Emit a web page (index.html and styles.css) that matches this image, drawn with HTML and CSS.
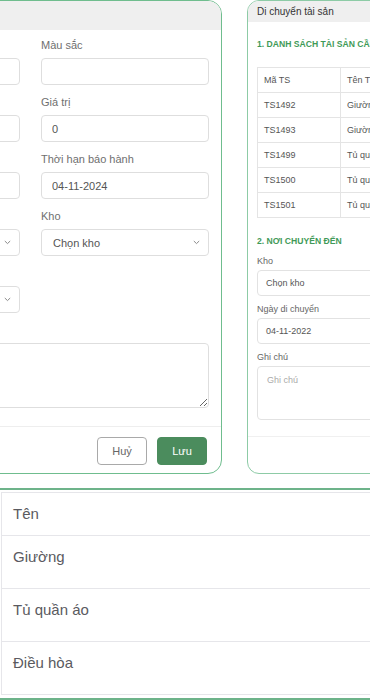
FILE: index.html
```html
<!DOCTYPE html>
<html>
<head>
    <title>Quản lý tài sản</title>
    <link rel="stylesheet" href="styles.css">
</head>
<body>
    <div class="top-row">
        <!-- Sửa tài sản -->
        <div class="card card-edit">
            <div class="card-head"></div>
            <div class="card-body">
                <div class="form-grid">
                    <div class="field">
                        <label></label>
                        <input class="input" type="text">
                    </div>
                    <div class="field">
                        <label>Màu sắc</label>
                        <input class="input" type="text">
                    </div>
                    <div class="field">
                        <label></label>
                        <input class="input" type="text">
                    </div>
                    <div class="field">
                        <label>Giá trị</label>
                        <input class="input" type="text" value="0">
                    </div>
                    <div class="field">
                        <label></label>
                        <input class="input" type="text">
                    </div>
                    <div class="field">
                        <label>Thời hạn báo hành</label>
                        <input class="input" type="text" value="04-11-2024">
                    </div>
                    <div class="field">
                        <label></label>
                        <div class="select"><span></span><svg width="7" height="5" viewBox="0 0 7 5"><path d="M0.8 1l2.7 2.6L6.2 1" fill="none" stroke="#8a8a8a" stroke-width="1"/></svg></div>
                    </div>
                    <div class="field">
                        <label>Kho</label>
                        <div class="select"><span>Chọn kho</span><svg width="7" height="5" viewBox="0 0 7 5"><path d="M0.8 1l2.7 2.6L6.2 1" fill="none" stroke="#8a8a8a" stroke-width="1"/></svg></div>
                    </div>
                    <div class="field">
                        <label></label>
                        <div class="select"><span></span><svg width="7" height="5" viewBox="0 0 7 5"><path d="M0.8 1l2.7 2.6L6.2 1" fill="none" stroke="#8a8a8a" stroke-width="1"/></svg></div>
                    </div>
                    <div class="field"></div>
                </div>
                <div class="field">
                    <label></label>
                    <textarea class="textarea"></textarea>
                </div>
            </div>
            <div class="card-foot">
                <button class="btn btn-outline">Huỷ</button>
                <button class="btn btn-green">Lưu</button>
            </div>
        </div>

        <!-- Di chuyển tài sản -->
        <div class="card card-move">
            <div class="move-head">Di chuyển tài sản</div>
            <div class="move-body">
                <div class="section-title">1. Danh sách tài sản cần di chuyển</div>
                <table class="move-table">
                    <tr><th>Mã TS</th><th>Tên TS</th></tr>
                    <tr><td>TS1492</td><td>Giường</td></tr>
                    <tr><td>TS1493</td><td>Giường</td></tr>
                    <tr><td>TS1499</td><td>Tủ quần áo</td></tr>
                    <tr><td>TS1500</td><td>Tủ quần áo</td></tr>
                    <tr><td>TS1501</td><td>Tủ quần áo</td></tr>
                </table>
                <div class="section-title second">2. Nơi chuyển đến</div>
                <div class="m-field">
                    <label>Kho</label>
                    <div class="m-input">Chọn kho</div>
                </div>
                <div class="m-field">
                    <label>Ngày di chuyển</label>
                    <div class="m-input">04-11-2022</div>
                </div>
                <div class="m-field">
                    <label>Ghi chú</label>
                    <div class="m-textarea">Ghi chú</div>
                </div>
            </div>
            <div class="move-foot"></div>
        </div>
    </div>

    <!-- Danh sách tên -->
    <div class="list-frame">
        <table class="name-table">
            <tr><th>Tên</th></tr>
            <tr><td>Giường</td></tr>
            <tr><td>Tủ quần áo</td></tr>
            <tr><td>Điều hòa</td></tr>
        </table>
    </div>
</body>
</html>
```

FILE: styles.css
```css
body {
    margin: 0;
    width: 370px;
    height: 700px;
    overflow: hidden;
    background: #fff;
    font-family: "Liberation Sans", Arial, sans-serif;
    color: #555;
}
.top-row {
    display: flex;
    gap: 25px;
    margin-left: -160px;
    height: 474px;
}
.card {
    flex: none;
    box-sizing: border-box;
    height: 474px;
    border: 1px solid #6fbd8e;
    border-radius: 14px;
    background: #fff;
    overflow: hidden;
    display: flex;
    flex-direction: column;
}

/* card sửa tài sản */
.card-edit {
    width: 382px;
}
.card-head {
    height: 29px;
    background: #efefef;
}
.card-body {
    padding: 8px 12px 18px 11px;
    border-bottom: 1px solid #eeeeee;
}
.form-grid {
    display: grid;
    grid-template-columns: 168px 168px;
    column-gap: 21px;
}
.field {
    margin-bottom: 10px;
}
.card-body > .field {
    margin-bottom: 0;
}
.field label {
    display: block;
    height: 14px;
    font-size: 11px;
    line-height: 14px;
    color: #6f6f6f;
    margin-bottom: 6px;
}
.input, .select {
    box-sizing: border-box;
    width: 100%;
    height: 27px;
    border: 1px solid #dedede;
    border-radius: 4px;
    padding: 0 10px;
    font-family: inherit;
    font-size: 11px;
    color: #555;
    background: #fff;
    outline: none;
}
.select {
    display: flex;
    align-items: center;
    justify-content: space-between;
    padding: 0 8px 0 11px;
}
.textarea {
    display: block;
    box-sizing: border-box;
    width: 100%;
    height: 65px;
    border: 1px solid #dedede;
    border-radius: 4px;
    resize: vertical;
    font-family: inherit;
    margin: 0;
}
.card-foot {
    display: flex;
    justify-content: flex-end;
    gap: 10px;
    padding: 10px 14px 0 0;
}
.btn {
    width: 50px;
    height: 28px;
    border-radius: 4px;
    font-family: inherit;
    font-size: 11px;
}
.btn-outline {
    background: #fff;
    border: 1px solid #a9a9a9;
    color: #666;
}
.btn-green {
    background: #4b8c5d;
    border: 1px solid #4b8c5d;
    color: #fff;
}

/* card di chuyển tài sản */
.card-move {
    width: 300px;
    border-radius: 12px;
    border-color: #8dcba6;
}
.move-head {
    height: 21px;
    line-height: 21px;
    padding: 0 9px;
    background: #efefef;
    font-size: 10px;
    color: #333;
}
.move-body {
    padding: 16px 0 16px 9px;
    border-bottom: 1px solid #f0f0f0;
}
.section-title {
    font-size: 8.6px;
    line-height: 12px;
    font-weight: bold;
    text-transform: uppercase;
    color: #3f9a58;
    white-space: nowrap;
    margin-bottom: 17px;
}
.section-title.second {
    margin-top: 17px;
    margin-bottom: 8px;
}
.move-table {
    border-collapse: collapse;
    width: 280px;
    font-size: 9px;
    color: #555;
}
.move-table th, .move-table td {
    border: 1px solid #e4e4e4;
    height: 24px;
    padding: 0 6px;
    text-align: left;
    font-weight: normal;
    white-space: nowrap;
}
.move-table th:first-child, .move-table td:first-child {
    width: 70px;
}
.m-field {
    margin-bottom: 7px;
}
.m-field label {
    display: block;
    font-size: 9px;
    line-height: 12px;
    color: #666;
    margin-bottom: 3px;
}
.m-input {
    box-sizing: border-box;
    width: 280px;
    height: 26px;
    line-height: 24px;
    border: 1px solid #e2e2e2;
    border-radius: 4px;
    padding: 0 8px;
    font-size: 9px;
    color: #555;
}
.m-textarea {
    box-sizing: border-box;
    width: 280px;
    height: 54px;
    border: 1px solid #e2e2e2;
    border-radius: 4px;
    padding: 8px 9px;
    font-size: 9px;
    color: #aaa;
}
.move-body .m-field:last-child {
    margin-bottom: 0;
}

/* bảng tên */
.list-frame {
    margin-top: 14px;
    border-top: 2px solid #6db38a;
    border-bottom: 2px solid #6db38a;
    padding: 2px 0 3px 1px;
}
.name-table {
    border-collapse: collapse;
    width: 420px;
    font-size: 15px;
    color: #5a5a60;
}
.name-table th, .name-table td {
    border: 1px solid #e6e6ea;
    text-align: left;
    font-weight: normal;
    vertical-align: top;
    padding: 12px 11px 0;
    line-height: 18px;
}
.name-table th {
    height: 30px;
}
.name-table td {
    height: 40px;
}
```
